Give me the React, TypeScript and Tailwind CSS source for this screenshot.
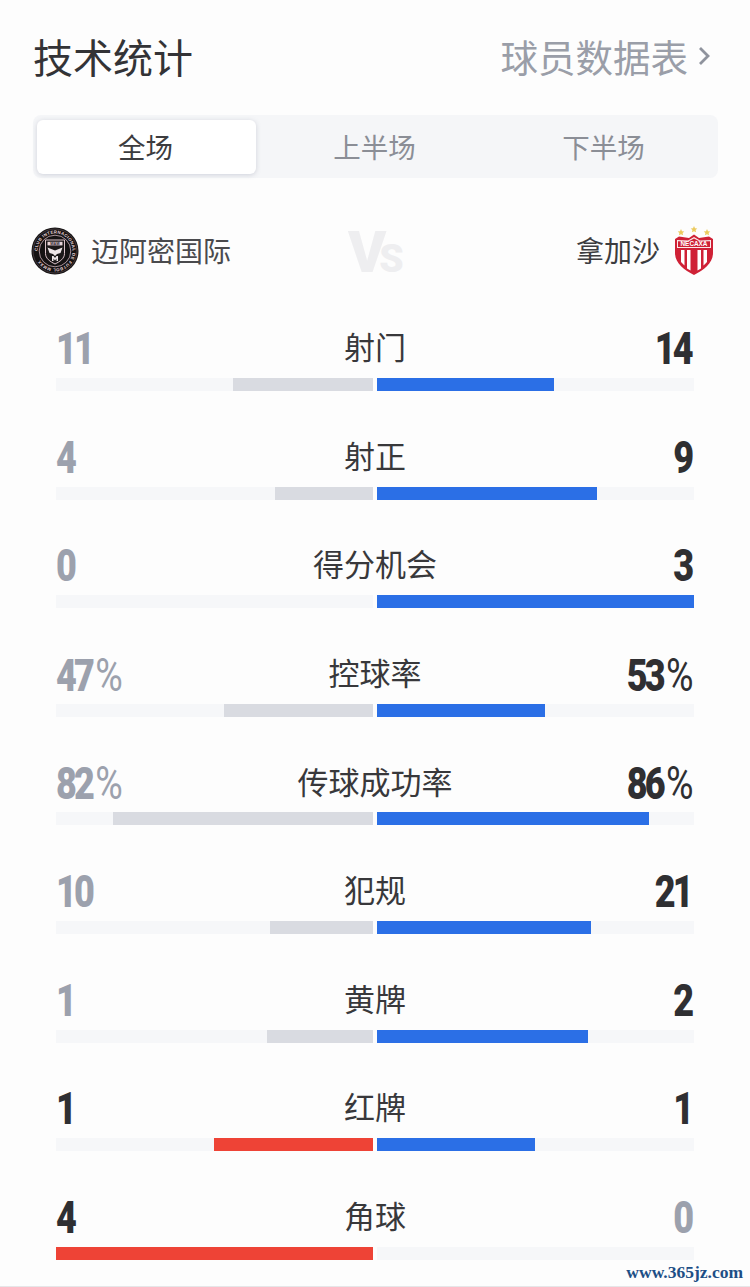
const cjk = "font-['Noto_Sans_CJK_SC','Noto_Sans',sans-serif]";

const stats = [
  { label: "射门", left: "11", right: "14", lw: 140, rw: 177, leftOn: false, rightOn: true },
  { label: "射正", left: "4", right: "9", lw: 98, rw: 220, leftOn: false, rightOn: true },
  { label: "得分机会", left: "0", right: "3", lw: 0, rw: 317, leftOn: false, rightOn: true },
  { label: "控球率", left: "47%", right: "53%", lw: 149, rw: 168, leftOn: false, rightOn: true },
  { label: "传球成功率", left: "82%", right: "86%", lw: 260, rw: 272, leftOn: false, rightOn: true },
  { label: "犯规", left: "10", right: "21", lw: 103, rw: 214, leftOn: false, rightOn: true },
  { label: "黄牌", left: "1", right: "2", lw: 106, rw: 211, leftOn: false, rightOn: true },
  { label: "红牌", left: "1", right: "1", lw: 159, rw: 158, leftOn: true, rightOn: true },
  { label: "角球", left: "4", right: "0", lw: 317, rw: 0, leftOn: true, rightOn: false },
];

function MiamiLogo() {
  return (
    <svg width="48" height="48" viewBox="0 0 48 48">
      <defs>
        <path id="ring" d="M24 24m-17.500 0a17.500 17.500 0 1 1 35 0a17.500 17.500 0 1 1 -35 0" />
      </defs>
      <circle cx="24" cy="24" r="23.500" fill="#151213" />
      <circle cx="24" cy="24" r="22" fill="none" stroke="#5f5156" strokeWidth="0.6" />
      <circle cx="24" cy="24" r="15.800" fill="none" stroke="#e8c9d2" strokeWidth="0.7" />
      <text fontSize="4.300" fontWeight="700" fill="#e6d3d8" fontFamily="Liberation Sans, sans-serif" letterSpacing="0.35">
        <textPath href="#ring">CLUB INTERNACIONAL DE FUTBOL MMXX</textPath>
      </text>
      <path d="M14.500 13h19v13.500c0 5-4.500 8-9.500 10.500-5-2.500-9.500-5.500-9.500-10.500z" fill="#1c1819" stroke="#f0d5dc" strokeWidth="0.9" />
      <rect x="16.500" y="14.800" width="15" height="3.600" fill="#e9d3d9" />
      <text x="24" y="17.700" textAnchor="middle" fontSize="3.200" fontWeight="700" fill="#1c1819" fontFamily="Liberation Sans, sans-serif">MIAMI</text>
      <path d="M16.500 20.500l7.500 3 7.500-3-2 5.500-3.500 1-2 2-2-2-3.500-1z" fill="#efe6e8" />
      <path d="M21 29h1.500l1.500 2 1.500-2H27v5h-1.500v-2.500L24 33.500l-1.500-2V34H21z" fill="#efe6e8" />
    </svg>
  );
}

function NecaxaLogo() {
  return (
    <svg width="40" height="50" viewBox="0 0 40 50">
      <path d="M7 3l1 2.200 2.300.3-1.700 1.500.5 2.300L7 8.200 4.900 9.300l.5-2.300L3.700 5.500 6 5.200z" fill="#eccb5f" />
      <path d="M20 0l1 2.200 2.300.3-1.700 1.500.5 2.300L20 5.200l-2.100 1.100.5-2.300-1.700-1.500 2.300-.3z" fill="#eccb5f" />
      <path d="M33 3l1 2.200 2.300.3-1.700 1.500.5 2.300L33 8.200l-2.100 1.100.5-2.300-1.700-1.500 2.300-.3z" fill="#eccb5f" />
      <path d="M20 8.500l5 3.500 10-1.500 4 2.500v14c0 10-9 17-19 22C10 44 1 37 1 27V13l4-2.500 10 1.500z" fill="#cf2136" />
      <path d="M7 24h3.500v15.500L7 36zM13 24h3.500v20.500L13 42.500zM23.500 24H27v18.500l-3.500 2zM29.500 24H33v12l-3.500 3.500z" fill="#fff" />
      <path d="M3 14l11 .5 6-3.500 6 3.500 11-.5v8H3z" fill="#fbe9ea" />
      <path d="M4 15.200l10.300.4 5.700-3.200 5.700 3.200 10.300-.4v5.800H4z" fill="#cf2136" />
      <text x="20" y="20" textAnchor="middle" fontSize="6.400" fontWeight="700" fill="#fff" fontFamily="Liberation Sans, sans-serif">NECAXA</text>
    </svg>
  );
}

function Num({ value, on, side }: { value: string; on: boolean; side: "left" | "right" }) {
  const digits = value.replace("%", "");
  const pct = value.endsWith("%");
  return (
    <span
      className={`inline-block whitespace-nowrap font-['Roboto',sans-serif] font-black text-[45px] leading-[62px] tracking-[-3.500px] translate-y-[2px] scale-x-[0.8] ${
        side === "left" ? "origin-left" : "origin-right"
      } ${!pct && side === "right" ? "pr-[3.500px]" : ""} ${on ? "text-[#2f2f32]" : "text-[#9ca1ad]"}`}
    >
      {digits}
      {pct && <span className="font-normal text-[47px] tracking-normal ml-[4px]">%</span>}
    </span>
  );
}

function StatRow({ s }: { s: (typeof stats)[number] }) {
  return (
    <div>
      <div className="grid grid-cols-[1fr_auto_1fr] items-center h-[62px]">
        <div className="text-left">
          <Num value={s.left} on={s.leftOn} side="left" />
        </div>
        <div className={`${cjk} text-[31px] leading-[58px] text-[#38383b] -translate-y-[1px]`}>{s.label}</div>
        <div className="text-right">
          <Num value={s.right} on={s.rightOn} side="right" />
        </div>
      </div>
      <div className="flex gap-[4px] h-[13px]">
        <div className="flex-1 flex justify-end bg-[#f6f7f9]">
          <div className={s.leftOn ? "bg-[#ee4336]" : "bg-[#d9dbe1]"} style={{ width: s.lw }} />
        </div>
        <div className="flex-1 flex justify-start bg-[#f6f7f9]">
          <div className="bg-[#2b6fe6]" style={{ width: s.rw }} />
        </div>
      </div>
    </div>
  );
}

export default function App() {
  return (
    <div className={`${cjk} relative w-[750px] h-[1287px] overflow-hidden bg-[#fdfdfd] border-b border-[#e6e6e8]`}>
      {/* header */}
      <div className="flex items-center justify-between pl-[33px] pr-[40px] pt-[27px] h-[84px]">
        <h1 className="text-[40px] leading-[52px] font-normal text-[#333336]">技术统计</h1>
        <div className="flex items-center gap-[10px] text-[37.500px] leading-[52px] text-[#9a9ea8]">
          <span>球员数据表</span>
          <svg width="12" height="20" viewBox="0 0 12 20" fill="none" stroke="#8f939d" strokeWidth="2.800">
            <path d="M2 2l8 8-8 8" />
          </svg>
        </div>
      </div>

      {/* tabs */}
      <div className="mt-[31px] ml-[33px] w-[685px] h-[63px] rounded-[8px] bg-[#f5f6f8] p-[5px_4px_4px] grid grid-cols-3 gap-[10px] text-[27.500px] leading-[50px]">
        <div className="flex items-center justify-center pb-[2px] pr-[2px] rounded-[6px] bg-white text-[#3c3c3f] shadow-[0_1px_5px_rgba(120,125,150,0.3)]">全场</div>
        <div className="flex items-center justify-center pb-[2px] pr-[2px] text-[#8b8e96]">上半场</div>
        <div className="flex items-center justify-center pb-[2px] pr-[2px] text-[#8b8e96]">下半场</div>
      </div>

      {/* teams */}
      <div className="relative flex items-center justify-between mt-[48px] pl-[31px] pr-[36px] h-[50px]">
        <div className="flex items-center gap-[12px] text-[28px] text-[#4a4a4d]">
          <MiamiLogo />
          <span className="-translate-y-[1px]">迈阿密国际</span>
        </div>
        <div className="absolute left-[348px] top-[-3px] font-['Roboto',sans-serif] font-black text-[#eeeef0] text-[58px] leading-[58px] tracking-[-7px] whitespace-nowrap">
          V<span className="text-[39px] tracking-normal">S</span>
        </div>
        <div className="flex items-center gap-[14px] text-[28px] text-[#3c3c3f]">
          <span className="-translate-y-[1px]">拿加沙</span>
          <NecaxaLogo />
        </div>
      </div>

      {/* stats */}
      <div className="flex flex-col gap-[33.600px] px-[56px] mt-[40px]">
        {stats.map((s) => (
          <StatRow key={s.label} s={s} />
        ))}
      </div>

      <div className="absolute right-[7px] bottom-[4px] font-['Liberation_Serif',serif] font-bold text-[17.500px] leading-[20px] text-[#1d4f86]">
        www.365jz.com
      </div>
    </div>
  );
}
